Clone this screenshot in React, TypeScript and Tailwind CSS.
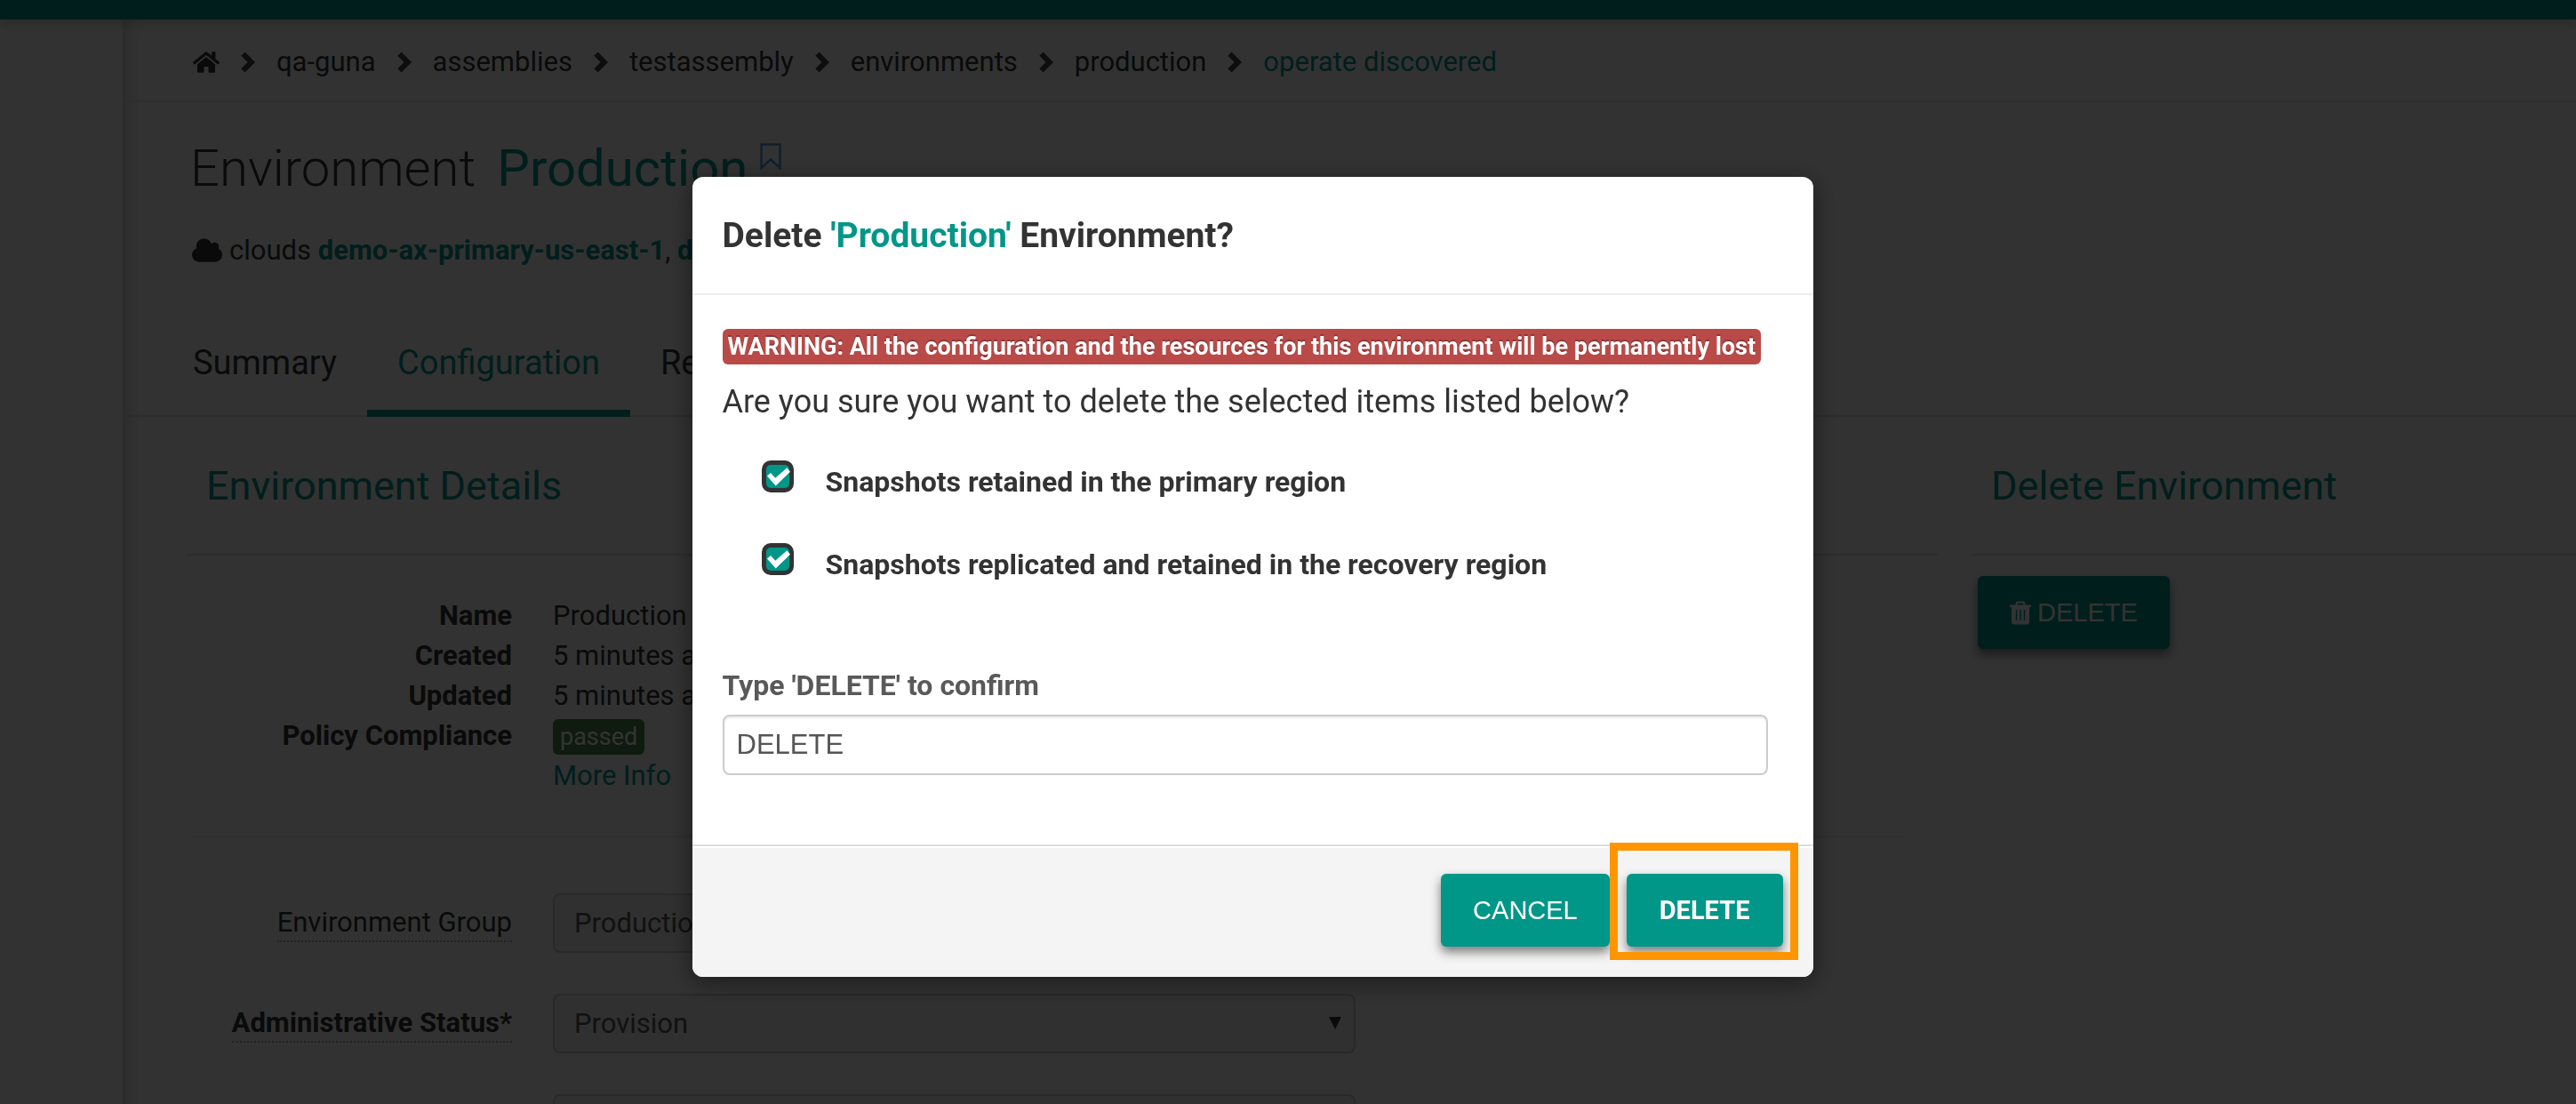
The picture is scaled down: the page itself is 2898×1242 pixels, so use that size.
import { useState } from "react";
import { FaHome } from "react-icons/fa";

const crumbs = ["qa-guna", "assemblies", "testassembly", "environments", "production"];

function Chevron() {
  return (
    <svg viewBox="0 0 16 24" className="h-6 w-4 fill-[#444]" aria-hidden="true">
      <path d="M4.600 0.600 L16 12 L4.600 23.400 L0.300 19.300 L7.600 12 L0.300 4.700 Z" />
    </svg>
  );
}

function Cloud() {
  return (
    <svg viewBox="0 0 34 27" className="h-[27px] w-[34px] fill-[#333]" aria-hidden="true">
      <circle cx="13.5" cy="9" r="8.700" />
      <circle cx="25.500" cy="9.500" r="4.800" />
      <circle cx="8" cy="18.700" r="8" />
      <circle cx="26" cy="18.700" r="8" />
      <rect x="8" y="10" width="18" height="16.700" />
    </svg>
  );
}

function Trash() {
  return (
    <svg viewBox="0 0 24 27" className="h-[27px] w-6" aria-hidden="true">
      <path d="M7 5 L8.500 1.500 H15.500 L17 5" className="fill-none stroke-white" strokeWidth="2.200" />
      <path d="M0 4.500 H24 V7 H22 V23.500 Q22 26.500 19 26.500 H5 Q2 26.500 2 23.500 V7 H0 Z" className="fill-white" />
      <path d="M7.500 10 V22 M12 10 V22 M16.500 10 V22" className="fill-none stroke-[#009688]" strokeWidth="1.400" />
    </svg>
  );
}

function Breadcrumb() {
  return (
    <nav aria-label="Breadcrumb" className="border-b-2 border-[#e4e4e4] pt-7 pb-[23px] pl-[79px]">
      <ol className="flex items-center gap-6 leading-10">
        <li>
          <a href="#home" aria-label="Home">
            <FaHome className="size-[30px]" />
          </a>
        </li>
        {crumbs.map((c) => (
          <li key={c} className="flex items-center gap-6">
            <Chevron />
            <a href={"#" + c}>{c}</a>
          </li>
        ))}
        <li className="flex items-center gap-6">
          <Chevron />
          <a href="#operate" className="text-[#009688]">
            operate discovered
          </a>
        </li>
      </ol>
    </nav>
  );
}

function SectionTitle({ children }: { children: string }) {
  return (
    <h2 className="border-b-2 border-[#e0e0e0] px-[22px] pt-[50px] pb-12 text-[45px] leading-14 text-[#009688]">
      {children}
    </h2>
  );
}

function Detail({ label, children }: { label: string; children: React.ReactNode }) {
  return (
    <>
      <dt className="text-right font-bold">{label}</dt>
      <dd>{children}</dd>
    </>
  );
}

function SelectRow({ id, label, value, bold }: { id: string; label: string; value: string; bold?: boolean }) {
  return (
    <div className="grid grid-cols-[366px_903px] items-center gap-x-[46px]">
      <div className="flex justify-end">
        <label htmlFor={id} className={"border-b-2 border-dotted border-[#aaa] leading-10 " + (bold ? "font-bold" : "")}>
          {label}
        </label>
      </div>
      <div className="relative">
        <select
          id={id}
          disabled
          className="h-[67px] w-full appearance-none rounded-lg border-2 border-[#ccc] bg-[#eee] px-[22px] text-[#555]"
        >
          <option>{value}</option>
        </select>
        <svg viewBox="0 0 14 14" className="pointer-events-none absolute top-[26px] right-4 size-3.5 fill-[#333]" aria-hidden="true">
          <path d="M0 0 H14 L7 14 Z" />
        </svg>
      </div>
    </div>
  );
}

function Check({ id, label }: { id: string; label: string }) {
  const [on, setOn] = useState(true);
  return (
    <div className="flex items-start">
      <span className="relative size-9">
        <input
          id={id}
          type="checkbox"
          checked={on}
          onChange={(e) => setOn(e.target.checked)}
          className="block size-9 appearance-none rounded-[10px] border-5 border-[#333] checked:bg-[#009688]"
        />
        {on && (
          <svg viewBox="0 0 26 26" className="pointer-events-none absolute inset-[5px] size-[26px] overflow-visible fill-white" aria-hidden="true">
            <path d="M1 12.500 L5 9 L10.300 14.800 L23.300 3.300 L27 7.700 L10.700 23.500 Z" />
          </svg>
        )}
      </span>
      <label htmlFor={id} className="mt-1 ml-9 text-[32px] leading-10 font-bold">
        {label}
      </label>
    </div>
  );
}

function DeleteDialog() {
  const [text, setText] = useState("DELETE");
  return (
    <div className="fixed inset-0 z-20 flex items-start justify-center bg-black/80 pt-[199px] pr-20">
      <section
        role="dialog"
        aria-modal="true"
        aria-labelledby="dialog-title"
        className="w-[1261px] overflow-hidden rounded-xl bg-white text-[#333] shadow-[0_6px_28px_rgba(0,0,0,0.5)]"
      >
        <header className="border-b-2 border-[#eee] px-[34px] pt-[41px] pb-10">
          <h1 id="dialog-title" className="text-[39px] leading-[50px] font-bold">
            Delete <span className="text-[#009688]">'Production'</span> Environment?
          </h1>
        </header>
        <div className="px-[34px] pt-[38px] pb-[78px]">
          <strong className="block w-fit rounded-md bg-[#b94a48] px-1.5 text-[27px] leading-10 font-bold whitespace-nowrap text-white [text-shadow:0_-2px_0_rgba(0,0,0,0.25)]">
            WARNING: All the configuration and the resources for this environment will be permanently lost
          </strong>
          <p className="mt-3.5 text-[36px] leading-14">Are you sure you want to delete the selected items listed below?</p>
          <div className="mt-[38px] flex flex-col gap-[49px] pl-11">
            <Check id="primary" label="Snapshots retained in the primary region" />
            <Check id="recovery" label="Snapshots replicated and retained in the recovery region" />
          </div>
          <label htmlFor="confirm" className="mt-24 block text-[32px] leading-10 font-bold text-[#595959]">
            Type 'DELETE' to confirm
          </label>
          <input
            id="confirm"
            value={text}
            onChange={(e) => setText(e.target.value)}
            className="mt-[13px] block h-[68px] w-[1176px] rounded-lg border-2 border-[#ccc] px-3.5 font-['Liberation_Sans',sans-serif] text-[31px] text-[#555] shadow-[inset_0_2px_2px_rgba(0,0,0,0.075)]"
          />
        </div>
        <footer className="flex justify-end gap-[19px] border-t-2 border-[#ddd] bg-[#f4f4f4] pt-[31px] pr-[34px] pb-[34px] shadow-[inset_0_2px_0_#fff]">
          <button className="h-[82px] rounded-md bg-[#009688] px-9 font-['Liberation_Sans',sans-serif] text-[29px] text-white shadow-[0_6px_12px_rgba(0,0,0,0.5)]">
            CANCEL
          </button>
          <div className="relative">
            <button className="h-[82px] rounded-md bg-[#009688] px-[37px] text-[29px] font-bold text-white shadow-[0_6px_12px_rgba(0,0,0,0.5)]">
              DELETE
            </button>
            <div className="pointer-events-none absolute -top-[35px] -right-[17px] -bottom-[15px] -left-[19px] border-9 border-[#ff9500]" />
          </div>
        </footer>
      </section>
    </div>
  );
}

export default function App() {
  return (
    <div className="flex h-screen flex-col overflow-hidden bg-[#fafafa] font-['Roboto',sans-serif] text-[31px] leading-[45px] text-[#333]">
      <div className="z-10 h-[22px] shrink-0 bg-[#009688] shadow-[0_2px_16px_rgba(0,0,0,0.25)]" />
      <div className="flex flex-1">
        <aside className="w-[138px] shrink-0 shadow-[0_0_20px_rgba(0,0,0,0.3)]" />
        <main className="min-w-0 flex-1">
          <Breadcrumb />
          <div className="flex items-start pt-[38px] pl-[76px]">
            <h1 className="text-[58px] leading-[72px] font-light">
              Environment <span className="ml-2.5 font-normal text-[#009688]">Production</span>
            </h1>
            <svg viewBox="0 0 24 30" className="mt-2 ml-3.5 h-[30px] w-6 fill-none stroke-[#4f9de6]" strokeWidth="2.500" aria-hidden="true">
              <path d="M1.500 1.500 H22.500 V28 L12 18.500 L1.500 28 Z" />
            </svg>
          </div>
          <p className="mt-[34px] flex items-center gap-2 pl-[78px] whitespace-nowrap">
            <Cloud />
            <span>
              clouds{" "}
              <a href="#primary-cloud" className="font-bold text-[#009688]">
                demo-ax-primary-us-east-1
              </a>
              ,{" "}
              <a href="#secondary-cloud" className="font-bold text-[#009688]">
                demo-ax-secondary
              </a>
            </span>
          </p>
          <div role="tablist" className="mt-20 flex items-start border-b-2 border-[#e0e0e0] pl-[45px] text-[38px] leading-12">
            <button role="tab" className="px-[34px] pb-[29px]">Summary</button>
            <button role="tab" aria-selected="true" className="-mb-0.5 border-b-8 border-[#009688] px-[34px] pb-[29px] text-[#009688]">
              Configuration
            </button>
            <button role="tab" className="px-[34px] pb-[29px]">Releases</button>
          </div>
          <div className="flex gap-[38px] pl-[72px]">
            <section className="min-w-0 flex-1">
              <SectionTitle>Environment Details</SectionTitle>
              <dl className="mt-[45px] grid grid-cols-[366px_1fr] gap-x-[46px]">
                <Detail label="Name">Production</Detail>
                <Detail label="Created">5 minutes ago</Detail>
                <Detail label="Updated">5 minutes ago</Detail>
                <Detail label="Policy Compliance">
                  <span className="mt-1 block w-fit rounded-md bg-[#468847] px-2 text-[27px] leading-10 text-white">passed</span>
                </Detail>
                <dd className="col-start-2">
                  <a href="#more" className="text-[#009688]">More Info</a>
                </dd>
              </dl>
              <hr className="mt-[45px] mr-9 ml-1.5 border-t-2 border-[#eaeaea]" />
              <form className="mt-[63px] flex flex-col gap-[46px]">
                <SelectRow id="group" label="Environment Group" value="Production" />
                <SelectRow id="status" label="Administrative Status*" value="Provision" bold />
                <SelectRow id="delivery" label="" value="" />
              </form>
            </section>
            <section className="w-[680px] shrink-0">
              <SectionTitle>Delete Environment</SectionTitle>
              <button className="mt-[23px] ml-[7px] flex h-[82px] items-center gap-[7px] rounded-md bg-[#009688] px-9 font-['Liberation_Sans',sans-serif] text-[29px] text-white shadow-[0_6px_12px_rgba(0,0,0,0.5)]">
                <Trash />
                DELETE
              </button>
            </section>
          </div>
        </main>
      </div>
      <DeleteDialog />
    </div>
  );
}
